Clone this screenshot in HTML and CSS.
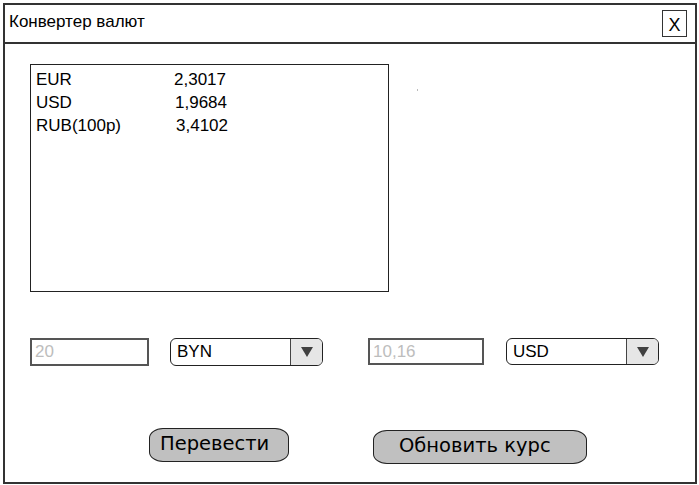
FILE: index.html
```html
<!DOCTYPE html>
<html lang="ru">
<head>
<meta charset="utf-8">
<title>Конвертер валют</title>
<link rel="stylesheet" href="styles.css">
</head>
<body>
<div class="window">
  <div class="titlebar">
    <span class="title">Конвертер валют</span>
    <span class="close">X</span>
  </div>
  <div class="content">
    <div class="top-row">
      <div class="rates">
        <div class="rate"><span class="cur">EUR</span><span class="val">2,3017</span></div>
        <div class="rate"><span class="cur">USD</span><span class="val v2">1,9684</span></div>
        <div class="rate"><span class="cur">RUB(100р)</span><span class="val v3">3,4102</span></div>
      </div>
      <span class="speck"></span>
    </div>
    <div class="inputs">
      <div class="field f1">20</div>
      <div class="select s1"><span class="sel-text">BYN</span><span class="arrow"><svg width="12" height="10" viewBox="0 0 12 10"><path d="M0 0H12L6 10Z" fill="#404040"/></svg></span></div>
      <div class="field f2">10,16</div>
      <div class="select s2"><span class="sel-text">USD</span><span class="arrow"><svg width="12" height="10" viewBox="0 0 12 10"><path d="M0 0H12L6 10Z" fill="#404040"/></svg></span></div>
    </div>
    <div class="buttons">
      <div class="btn b1">Перевести</div>
      <div class="btn b2">Обновить курс</div>
    </div>
  </div>
</div>
</body>
</html>
```
FILE: styles.css
```css
html, body {
  margin: 0;
  padding: 0;
  background: #fff;
}
body {
  font-family: "Liberation Sans", Arial, sans-serif;
  color: #000;
}
.window {
  box-sizing: border-box;
  margin: 3px 0 0 3px;
  width: 694px;
  height: 481px;
  border: 2px solid #333;
  display: flex;
  flex-direction: column;
}
.titlebar {
  box-sizing: border-box;
  height: 39px;
  border-bottom: 2px solid #333;
  display: flex;
  align-items: flex-start;
  justify-content: space-between;
  padding: 0 8px 0 4px;
}
.title {
  font-size: 17px;
  line-height: 17px;
  margin-top: 8px;
}
.close {
  box-sizing: border-box;
  width: 25px;
  height: 27px;
  margin-top: 5px;
  border: 1.5px solid #333;
  font-size: 18px;
  line-height: 28px;
  text-align: center;
}
.content {
  flex: 1;
  padding: 20px 0 0 25px;
}
.top-row {
  display: flex;
}
.rates {
  box-sizing: border-box;
  width: 359px;
  height: 228px;
  border: 1px solid #222;
  padding: 3px 0 0 5px;
  font-size: 17px;
  line-height: 23px;
}
.rate {
  display: flex;
}
.cur {
  width: 138px;
}
.v2 { margin-left: 1px; }
.v3 { margin-left: 2px; }
.speck {
  width: 1px;
  height: 2px;
  background: #bbb;
  margin: 25px 0 0 28px;
}
.inputs {
  display: flex;
  margin-top: 46px;
  align-items: flex-start;
}
.field {
  box-sizing: border-box;
  height: 28px;
  border: 2px solid #555;
  color: #bdbdbd;
  font-size: 17px;
  line-height: 24px;
  padding-left: 3px;
}
.f1 { width: 119px; }
.f2 { width: 116px; margin-left: 45px; height: 27px; line-height: 23px; }
.select {
  box-sizing: border-box;
  width: 153px;
  height: 28px;
  border: 1.5px solid #222;
  border-radius: 6px;
  display: flex;
  overflow: hidden;
}
.s1 { margin-left: 21px; }
.s2 { margin-left: 22px; height: 27px; }
.sel-text {
  flex: 1;
  font-size: 17px;
  line-height: 25px;
  padding-left: 6px;
}
.arrow {
  width: 31px;
  background: #e6e6e6;
  border-left: 1px solid #444;
  display: flex;
  align-items: center;
  justify-content: center;
}
.buttons {
  display: flex;
  align-items: flex-start;
  margin-top: 62px;
  padding-left: 119px;
}
.btn {
  box-sizing: border-box;
  height: 34px;
  background: #c0c0c0;
  border: 1px solid #222;
  border-radius: 14px / 10px;
  font-family: "DejaVu Sans", Verdana, sans-serif;
  font-size: 19.5px;
  line-height: 30px;
}
.b1 { width: 140px; padding-left: 10px; }
.b2 { width: 214px; margin-left: 84px; margin-top: 2px; padding-left: 25px; }
```
